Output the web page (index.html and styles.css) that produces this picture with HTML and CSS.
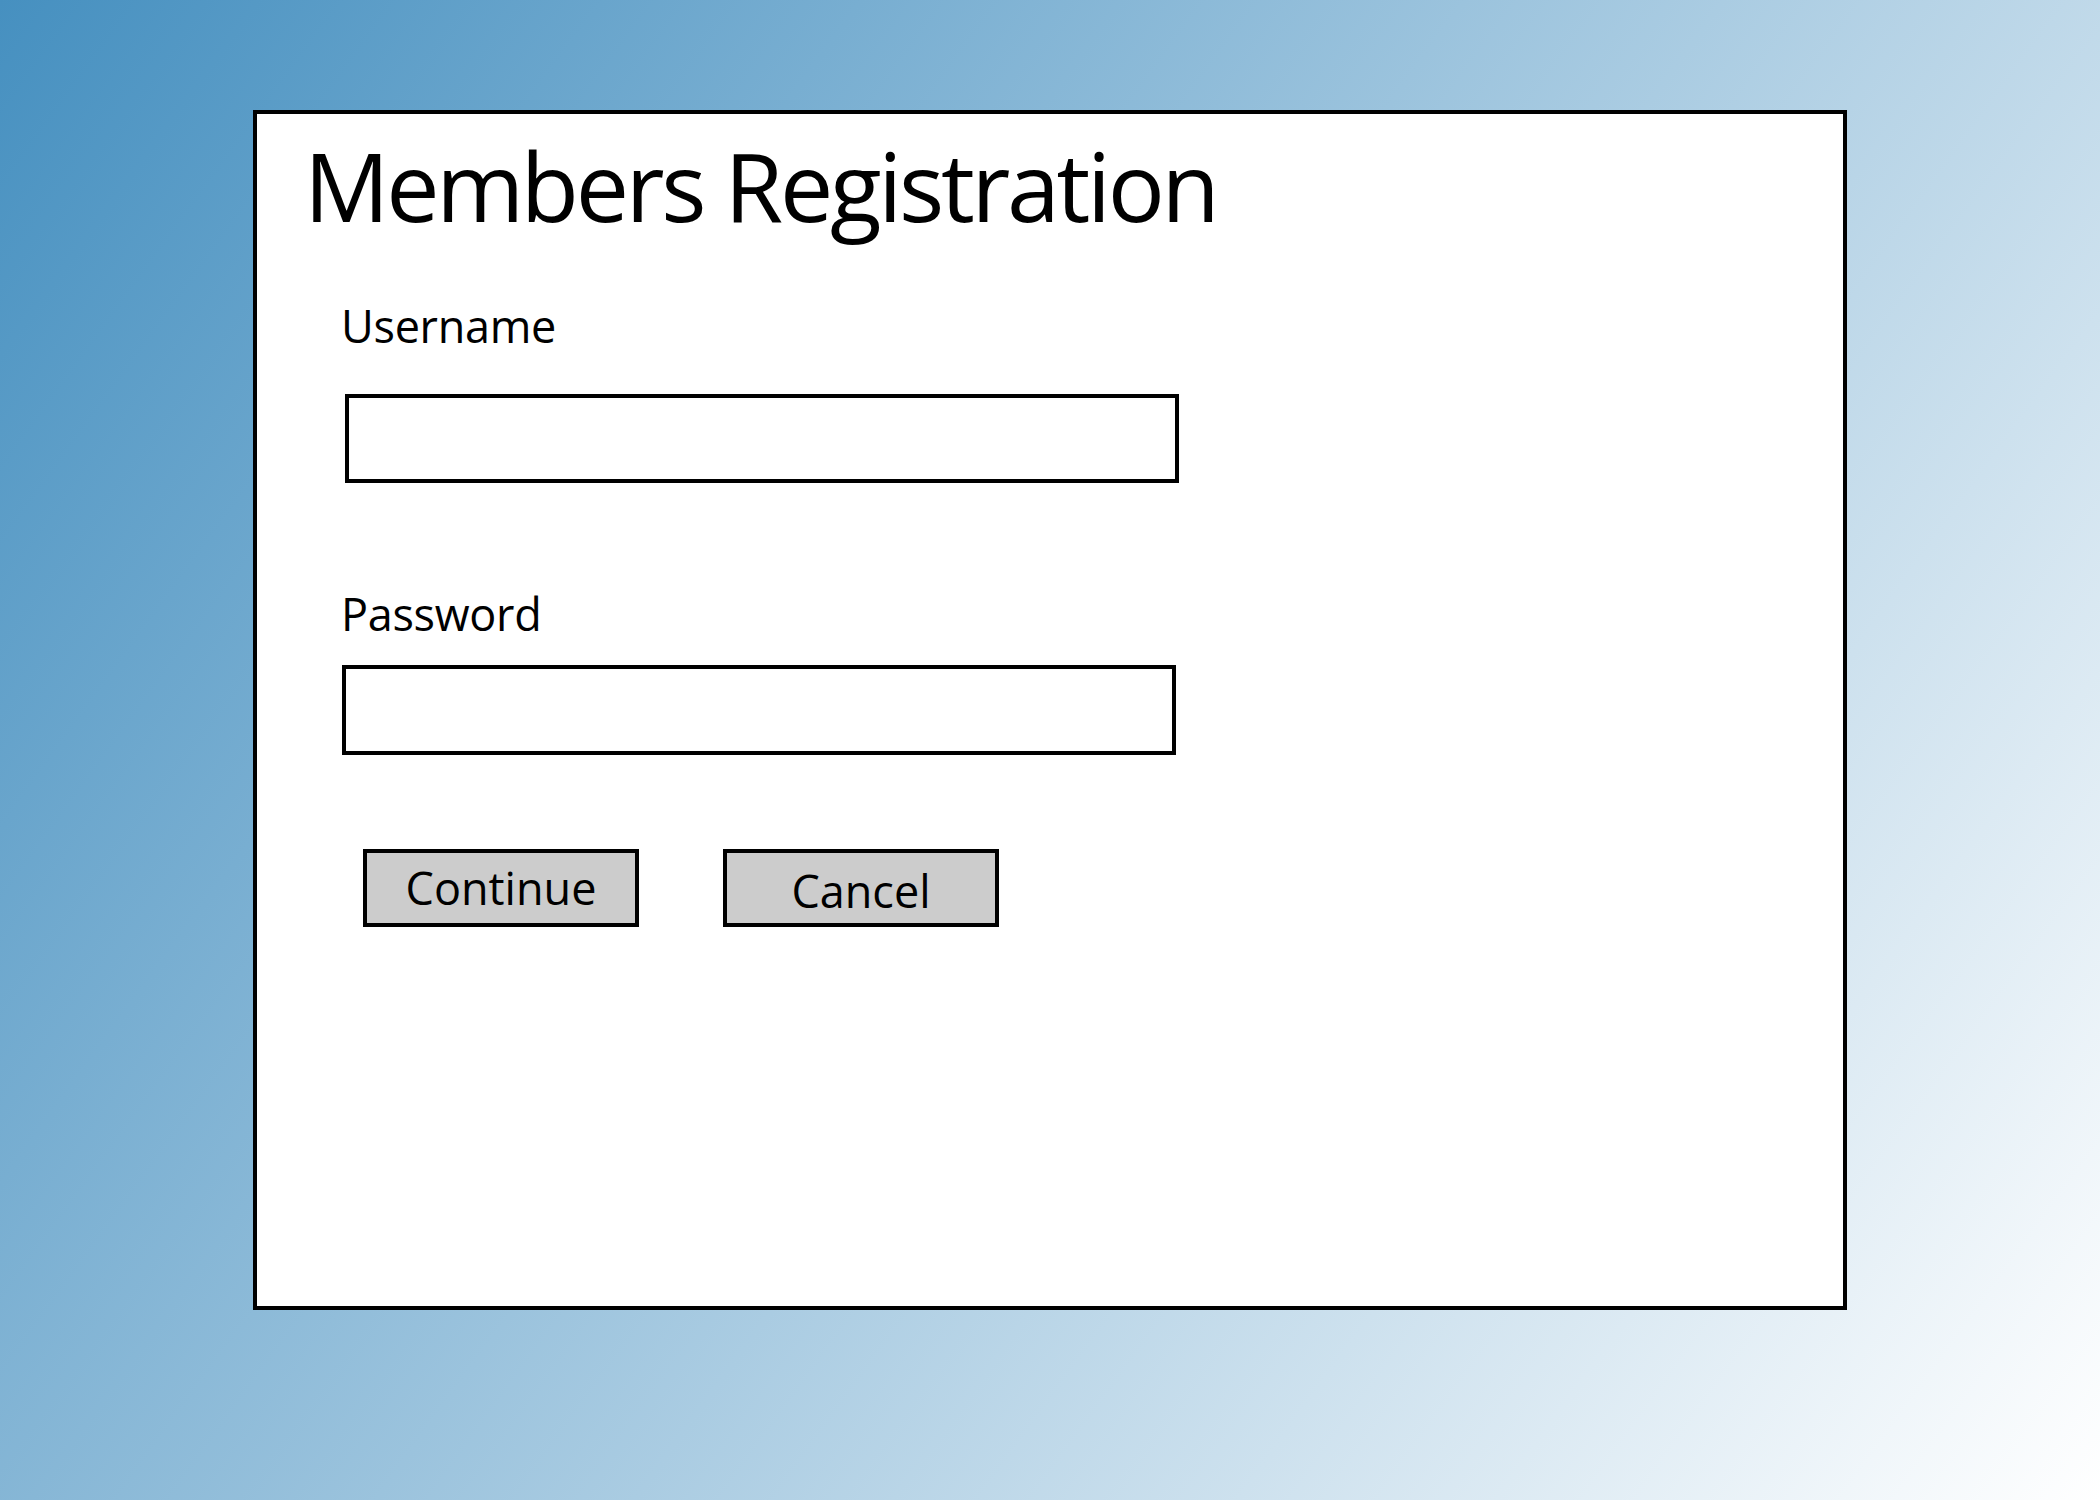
FILE: index.html
```html
<!DOCTYPE html>
<html lang="en">
<head>
<meta charset="utf-8">
<title>Members Registration</title>
<link rel="stylesheet" href="styles.css">
</head>
<body>
<main class="panel">
  <h1 class="title">Members Registration</h1>
  <form class="form">
    <label class="label label-user" for="username">Username</label>
    <input class="input input-user" id="username" type="text">
    <label class="label label-pass" for="password">Password</label>
    <input class="input input-pass" id="password" type="password">
    <div class="actions">
      <button type="button" class="btn btn-continue">Continue</button>
      <button type="button" class="btn btn-cancel">Cancel</button>
    </div>
  </form>
</main>
</body>
</html>
```
FILE: styles.css
```css
html, body {
  margin: 0;
  padding: 0;
}
body {
  width: 2100px;
  height: 1500px;
  overflow: hidden;
  background: linear-gradient(126deg, #4690c0 0%, #ffffff 100%);
  font-family: "Open Sans", "Noto Sans", sans-serif;
  color: #000;
}
.panel {
  box-sizing: border-box;
  margin: 110px 0 0 253px;
  width: 1594px;
  height: 1200px;
  border: 4px solid #000;
  background: #fff;
  padding: 21px 0 0 47px;
}
.title {
  margin: 0;
  font-size: 95px;
  line-height: 100px;
  font-weight: 400;
  letter-spacing: -3.3px;
}
.form {
  display: flex;
  flex-direction: column;
  align-items: flex-start;
  margin-left: 37px;
}
.label {
  display: block;
  font-size: 45px;
  line-height: 50px;
  letter-spacing: -0.3px;
}
.label-user {
  margin-top: 66px;
}
.label-pass {
  margin-top: 106px;
}
.input {
  box-sizing: border-box;
  display: block;
  width: 834px;
  border: 4px solid #000;
  border-radius: 0;
  background: #fff;
  padding: 0;
  outline: none;
}
.input-user {
  margin: 43px 0 0 4px;
  height: 89px;
}
.input-pass {
  margin: 26px 0 0 1px;
  height: 90px;
}
.actions {
  display: flex;
  gap: 84px;
  margin: 94px 0 0 22px;
}
.btn {
  box-sizing: border-box;
  width: 276px;
  height: 78px;
  border: 4px solid #000;
  border-radius: 0;
  background: #cccccc;
  font-family: "Open Sans", "Noto Sans", sans-serif;
  font-size: 45px;
  line-height: 58px;
  color: #000;
  padding: 0;
}
.btn-cancel {
  padding-top: 6px;
}
```
